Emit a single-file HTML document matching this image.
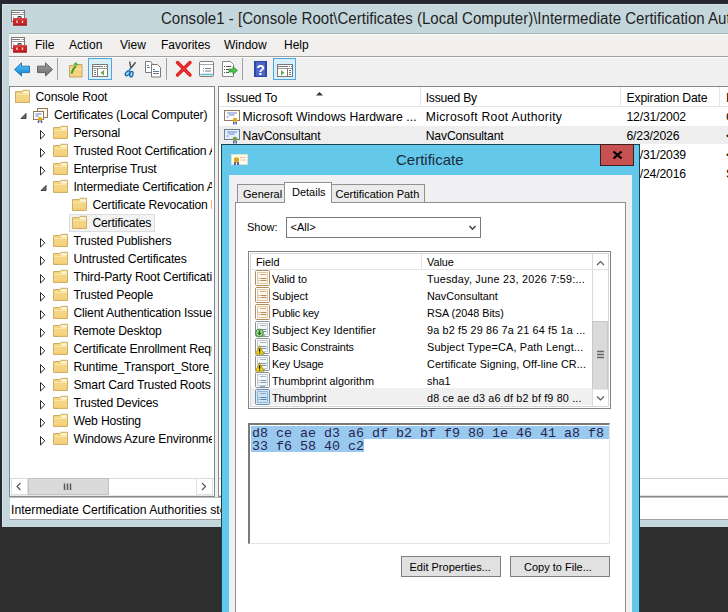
<!DOCTYPE html>
<html><head><meta charset="utf-8">
<style>
*{margin:0;padding:0;box-sizing:border-box}
html,body{width:728px;height:612px;overflow:hidden;background:#2e2e2e;font-family:"Liberation Sans",sans-serif;color:#000;position:relative}
.a{position:absolute}
.t{position:absolute;white-space:nowrap;line-height:1}
svg{position:absolute;overflow:visible}
.clip{position:absolute;overflow:hidden}
.tr{font-size:12.2px;letter-spacing:-0.18px;color:#000}
.tl{font-size:12.2px;letter-spacing:-0.16px;color:#000}
.tv{font-size:10.8px;color:#000}
.td{font-size:11px;color:#000}
</style></head><body>
<svg width="0" height="0" style="position:absolute">
<defs>
<symbol id="folder" viewBox="0 0 16 18">
<path d="M0.5 3.5h6.5l1-1.2h6.5v12.2h-14z" fill="#f4d583" stroke="#cfae66"/>
<path d="M8 3.3h6v2.2h-6z" fill="#fdf6de"/>
<path d="M1 6.5h13" stroke="#f9e6ac"/>
<path d="M1 13h13" stroke="#efca6e"/>
</symbol>
<symbol id="tri" viewBox="0 0 8 18">
<path d="M0.5 6.5L4.8 10.8L0.5 15z" fill="#fff" stroke="#2a2a2a"/>
</symbol>
<symbol id="trio" viewBox="0 0 8 18">
<path d="M6 7.5v5H1z" fill="#6e6e6e" stroke="#303030" stroke-width="0.9" stroke-linejoin="round"/>
</symbol>
<symbol id="certs" viewBox="0 0 16 18">
<rect x="4.5" y="2.5" width="10" height="9" fill="#fbf5ea" stroke="#8f7a5c"/>
<rect x="0.5" y="5.5" width="10" height="8" fill="#fff" stroke="#8f7a5c"/>
<path d="M2.5 8h6M2.5 10h3" stroke="#5d78c8"/>
<circle cx="7" cy="13" r="2.2" fill="#e0a81c"/>
<path d="M5.5 14.5v2.5M8.5 14.5v2.5" stroke="#3a4fa8" stroke-width="1.5"/>
</symbol>
<symbol id="cert" viewBox="0 0 17 19">
<rect x="0.5" y="3.5" width="15" height="10" fill="#fff" stroke="#977a5c"/>
<path d="M3 6h10M4.5 8h6M2.5 10h2" stroke="#6a84cf"/>
<circle cx="11" cy="13" r="2.3" fill="#e2a61e"/>
<path d="M9.8 15v2.5M12.2 15v2.5" stroke="#3d55b0" stroke-width="1.4"/>
</symbol>
<symbol id="certb" viewBox="0 0 17 19">
<rect x="0.5" y="3.5" width="15" height="10" fill="#e3f0fb" stroke="#6c7c8c"/>
<path d="M3 6h10M4.5 8h6M2.5 10h2" stroke="#6a84cf"/>
<circle cx="11" cy="13" r="2.3" fill="#7aa041"/>
<path d="M9.8 15v2.5M12.2 15v2.5" stroke="#3d55b0" stroke-width="1.4"/>
</symbol>
<symbol id="fo" viewBox="0 0 16 17">
<rect x="0.5" y="0.5" width="14" height="15" rx="1.2" fill="#fff" stroke="#b48c58"/>
<path d="M2.5 2.5h10v11h-10z" fill="#fdf6ec" stroke="#dfc6a3"/>
<path d="M5 4.5h6" stroke="#cfae82"/>
<path d="M3.5 8.5h1M5.5 8.5h6M3.5 10.5h1M5.5 10.5h6" stroke="#b38c5c"/>
</symbol>
<symbol id="fb" viewBox="0 0 16 17">
<rect x="0.5" y="0.5" width="14" height="15" rx="1.2" fill="#fff" stroke="#8c9298"/>
<path d="M2.5 2.5h10v11h-10z" fill="#f6f9fb" stroke="#c3cbd2"/>
<path d="M5 4.5h6" stroke="#aab4bd"/>
<path d="M3.5 8.5h1M5.5 8.5h6M3.5 10.5h1M5.5 10.5h6" stroke="#7f93a6"/>
<path d="M5 14.5h5" stroke="#6fb7d6"/>
</symbol>
<symbol id="fs" viewBox="0 0 16 17">
<rect x="0.5" y="0.5" width="14" height="15" rx="1.2" fill="#d6e8f8" stroke="#6e8fb0"/>
<path d="M2.5 2.5h10v11h-10z" fill="#cfe3f6" stroke="#94b6d6"/>
<path d="M5 4.5h6" stroke="#88a9c9"/>
<path d="M3.5 8.5h1M5.5 8.5h6M3.5 10.5h1M5.5 10.5h6" stroke="#5c84ad"/>
</symbol>
<symbol id="fg" viewBox="0 0 16 17">
<use href="#fb"/>
<circle cx="4.5" cy="12" r="3.9" fill="#a6dc8e" stroke="#3b8a3b" stroke-width="1"/>
<path d="M4.5 9.3v4.2M2.7 11.6l1.8 2l1.8-2" stroke="#2a6e2a" fill="none" stroke-width="1.3"/>
</symbol>
<symbol id="fw" viewBox="0 0 16 17">
<use href="#fb"/>
<path d="M4.6 7.6L0.4 16.2h8.5z" fill="#f6d60c" stroke="#a08a10" stroke-width="0.8" stroke-linejoin="round"/>
<path d="M4.6 10.5v3.2M4.6 14.4v1.2" stroke="#111" stroke-width="1.3"/>
</symbol>
</defs>
</svg>

<!-- top strip + MMC frame -->
<div class="a" style="left:0;top:0;width:728px;height:527px;background:#262a30"></div>
<div class="a" style="left:2px;top:4px;width:726px;height:523px;background:#c4d7dc;border-left:1px solid #d5e2e6;border-top:1px solid #d5e2e6"></div>
<div class="t" style="left:161px;top:11px;font-size:15.6px;transform:scaleX(0.965);transform-origin:0 0;color:#1f1f1f">Console1 - [Console Root\Certificates (Local Computer)\Intermediate Certification Authorities\Certificates]</div>
<!-- menu bar -->
<div class="a" style="left:9px;top:33px;width:719px;height:1px;background:#a9b4b8"></div>
<div class="a" style="left:9px;top:34px;width:719px;height:22px;background:#f1f0ef;border-top:1px solid #fafafa"></div>
<div class="a" style="left:9px;top:56px;width:719px;height:1px;background:#a0a0a0"></div>
<div class="t" style="left:35px;top:39px;font-size:12px">File</div>
<div class="t" style="left:69px;top:39px;font-size:12px">Action</div>
<div class="t" style="left:120px;top:39px;font-size:12px">View</div>
<div class="t" style="left:161px;top:39px;font-size:12px">Favorites</div>
<div class="t" style="left:224px;top:39px;font-size:12px">Window</div>
<div class="t" style="left:284px;top:39px;font-size:12px">Help</div>
<div class="a" style="left:9px;top:57px;width:719px;height:440px;background:#f0f0f0"></div>
<!-- toolbar -->
<div class="a" style="left:9px;top:57px;width:719px;height:29px;background:#f0f0f0;border-top:1px solid #fbfbfb"></div>
<div class="a" style="left:57px;top:58px;width:1px;height:22px;background:#a0a0a0"></div>
<div class="a" style="left:166px;top:58px;width:1px;height:22px;background:#a0a0a0"></div>
<div class="a" style="left:242px;top:58px;width:1px;height:22px;background:#a0a0a0"></div>
<div class="a" style="left:88px;top:58px;width:24px;height:22px;background:#d9f0fc;border:1px solid #4fa6de"></div>
<div class="a" style="left:273px;top:58px;width:23px;height:22px;background:#d9f0fc;border:1px solid #4fa6de"></div>

<!-- toolbar & app icons -->
<svg style="left:0;top:0" width="728" height="90">
<defs>
<g id="mmcico">
<rect x="11.5" y="10.5" width="13" height="11" fill="#fff" stroke="#7b7b7b"/>
<path d="M12 12.5h8M21.5 12.5h1M23 12.5h1" stroke="#7b7b7b"/>
<path d="M12 14.5h12" stroke="#9a9a9a"/>
<path d="M13 17h1" stroke="#7b7b7b"/>
<path d="M17.5 17.5q2-1.8 4 0" stroke="#222" fill="none" stroke-width="1.2"/>
<rect x="13" y="18" width="14" height="7.5" rx="1" fill="#c9252a"/>
<path d="M13.5 19h13" stroke="#e0585c"/>
<path d="M17 20.5v2.5M22.5 20.5v2.5" stroke="#f6e3c0" stroke-width="1.3"/>
<path d="M13 25h14" stroke="#8e1518"/>
</g>
<linearGradient id="gb" x1="0" y1="0" x2="0" y2="1"><stop offset="0" stop-color="#5cc8f7"/><stop offset="1" stop-color="#0d7fd0"/></linearGradient>
<linearGradient id="gg" x1="0" y1="0" x2="0" y2="1"><stop offset="0" stop-color="#9e9e9e"/><stop offset="1" stop-color="#6e6e6e"/></linearGradient>
</defs>
<use href="#mmcico"/>
<use href="#mmcico" y="27"/>
<!-- back -->
<path d="M14.5 69.5L21.5 62.8V66.2H29.5V72.6H21.5V76z" fill="url(#gb)" stroke="#1f6fb0" stroke-width="0.9" stroke-linejoin="round"/>
<!-- forward -->
<path d="M52.5 69.5L45.5 62.8V66.2H37.5V72.6H45.5V76z" fill="url(#gg)" stroke="#5a5a5a" stroke-width="0.9" stroke-linejoin="round"/>
<!-- folder up -->
<path d="M69.5 65.5h5l1 -1h6.5v12.5h-12.5z" fill="#f4d27f" stroke="#c5a467"/>
<path d="M70 69h12" stroke="#fbe6a8"/>
<path d="M71.5 73.5q1.5-5 4.5-7.5" stroke="#3f9a2a" stroke-width="2" fill="none"/>
<path d="M73 64.5l3-2.5l2.5 3.5z" fill="#42b03a"/>
<!-- show/hide tree -->
<rect x="92.5" y="64.5" width="15" height="12" fill="#fff" stroke="#7a7a7a"/>
<path d="M93 66.5h10M104 66.5h1M106 66.5h1" stroke="#7a7a7a"/>
<path d="M93 68.5h14" stroke="#9a9a9a"/>
<path d="M97.5 69v7" stroke="#7a7a7a"/>
<path d="M94 70.5h2M94 72.5h2M94 74.5h2" stroke="#7a7a7a"/>
<path d="M104 70l-3.5 2.8l3.5 2.8z" fill="#5fae46"/>
<!-- scissors -->
<path d="M129.6 61.5l1.4 6.5M135.6 62.3l-4.3 5.5" stroke="#505050" stroke-width="1.4"/>
<path d="M131 67.5l-1.5 2.5" stroke="#2a78c0" stroke-width="1.6"/>
<ellipse cx="127.6" cy="73.3" rx="1.7" ry="2.9" fill="#9adcf6" stroke="#1f66a8" stroke-width="1.3" transform="rotate(40 127.6 73.3)"/>
<ellipse cx="131.4" cy="74.2" rx="1.6" ry="2.8" fill="#9adcf6" stroke="#1f66a8" stroke-width="1.3" transform="rotate(12 131.4 74.2)"/>
<!-- copy -->
<path d="M145.5 61.5h5l1.5 1.5v9.5h-6.5z" fill="#fff" stroke="#7a7a7a"/>
<path d="M147 65.5h2M147 67.5h3" stroke="#6f8296"/>
<path d="M151.5 64.5h6l3 3v9.5h-9z" fill="#fff" stroke="#7a7a7a"/>
<path d="M153 69.5h2M153 71.5h6M153 73.5h6" stroke="#5e7891"/>
<!-- red x -->
<path d="M177.5 62.5l12.5 12.5M190 62.5l-12.5 12.5" stroke="#e01e1e" stroke-width="3.4" stroke-linecap="round"/>
<path d="M177.5 62.5l12.5 12.5M190 62.5l-12.5 12.5" stroke="#ff5a5a" stroke-width="1" stroke-linecap="round" opacity="0.6"/>
<!-- properties -->
<rect x="199.5" y="61.5" width="14" height="15" rx="1.5" fill="#fff" stroke="#7f7f7f"/>
<path d="M200 64.5h13" stroke="#a8a8a8"/>
<path d="M203 68.5h1M205 68.5h6M203 71h1M205 71h6" stroke="#6b7f93"/>
<path d="M200.5 74.5h12" stroke="#59b7c9" stroke-width="1.5"/>
<!-- export list -->
<path d="M222.5 61.5h8l3 3v12h-11z" fill="#fff" stroke="#8a8a8a"/>
<path d="M224 66.5h1M226 66.5h5M224 69.5h1M226 69.5h3M224 72.5h1M226 72.5h3" stroke="#555"/>
<path d="M229 69h4v-2.5l4.5 4l-4.5 4v-2.5h-4z" fill="#4cc04a" stroke="#2f8a2c" stroke-width="0.7"/>
<!-- help -->
<rect x="254" y="61" width="13" height="16" fill="#2f47a8"/>
<rect x="256" y="62" width="9" height="14" fill="#5a72d2" opacity="0.7"/>
<text x="260.5" y="74.5" font-family="Liberation Sans" font-weight="bold" font-size="14" fill="#fff" text-anchor="middle">?</text>
<!-- action pane -->
<rect x="277.5" y="64.5" width="15" height="12" fill="#fff" stroke="#7a7a7a"/>
<path d="M278 66.5h10M289 66.5h1M291 66.5h1" stroke="#7a7a7a"/>
<path d="M278 68.5h14" stroke="#9a9a9a"/>
<path d="M287.5 69v7" stroke="#7a7a7a"/>
<path d="M289 70.5h2M289 72.5h2M289 74.5h2" stroke="#7a7a7a"/>
<path d="M281 70l3.5 2.8l-3.5 2.8z" fill="#5fae46"/>
</svg>
<!-- tree panel -->
<div class="a" style="left:9px;top:86px;width:206px;height:411px;background:#fff;border:1px solid #828790"></div>
<div class="clip" style="left:10px;top:87px;width:202px;height:390px">
<svg style="left:5px;top:1px" width="16" height="18"><use href="#folder"/></svg>
<div class="t tr" style="left:25.5px;top:4.1px">Console Root</div>
<svg style="left:10px;top:19px" width="8" height="18"><use href="#trio"/></svg>
<svg style="left:23px;top:19px" width="16" height="18"><use href="#certs"/></svg>
<div class="t tr" style="left:44px;top:22.1px">Certificates (Local Computer)</div>
<svg style="left:30px;top:37px" width="8" height="18"><use href="#tri"/></svg>
<svg style="left:43px;top:37px" width="16" height="18"><use href="#folder"/></svg>
<div class="t tr" style="left:63.400000000000006px;top:40.1px">Personal</div>
<svg style="left:30px;top:55px" width="8" height="18"><use href="#tri"/></svg>
<svg style="left:43px;top:55px" width="16" height="18"><use href="#folder"/></svg>
<div class="t tr" style="left:63.400000000000006px;top:58.1px">Trusted Root Certification Authorities</div>
<svg style="left:30px;top:73px" width="8" height="18"><use href="#tri"/></svg>
<svg style="left:43px;top:73px" width="16" height="18"><use href="#folder"/></svg>
<div class="t tr" style="left:63.400000000000006px;top:76.1px">Enterprise Trust</div>
<svg style="left:30px;top:91px" width="8" height="18"><use href="#trio"/></svg>
<svg style="left:43px;top:91px" width="16" height="18"><use href="#folder"/></svg>
<div class="t tr" style="left:63.400000000000006px;top:94.1px">Intermediate Certification Authorities</div>
<svg style="left:62px;top:109px" width="16" height="18"><use href="#folder"/></svg>
<div class="t tr" style="left:82.4px;top:112.1px">Certificate Revocation List</div>
<div class="a" style="left:59px;top:127px;width:86px;height:18px;background:#f3f3f3;border:1px solid #dedede"></div>
<svg style="left:62px;top:127px" width="16" height="18"><use href="#folder"/></svg>
<div class="t tr" style="left:82.4px;top:130.1px">Certificates</div>
<svg style="left:30px;top:145px" width="8" height="18"><use href="#tri"/></svg>
<svg style="left:43px;top:145px" width="16" height="18"><use href="#folder"/></svg>
<div class="t tr" style="left:63.400000000000006px;top:148.1px">Trusted Publishers</div>
<svg style="left:30px;top:163px" width="8" height="18"><use href="#tri"/></svg>
<svg style="left:43px;top:163px" width="16" height="18"><use href="#folder"/></svg>
<div class="t tr" style="left:63.400000000000006px;top:166.1px">Untrusted Certificates</div>
<svg style="left:30px;top:181px" width="8" height="18"><use href="#tri"/></svg>
<svg style="left:43px;top:181px" width="16" height="18"><use href="#folder"/></svg>
<div class="t tr" style="left:63.400000000000006px;top:184.1px">Third-Party Root Certification Authorities</div>
<svg style="left:30px;top:199px" width="8" height="18"><use href="#tri"/></svg>
<svg style="left:43px;top:199px" width="16" height="18"><use href="#folder"/></svg>
<div class="t tr" style="left:63.400000000000006px;top:202.1px">Trusted People</div>
<svg style="left:30px;top:217px" width="8" height="18"><use href="#tri"/></svg>
<svg style="left:43px;top:217px" width="16" height="18"><use href="#folder"/></svg>
<div class="t tr" style="left:63.400000000000006px;top:220.1px">Client Authentication Issuers</div>
<svg style="left:30px;top:235px" width="8" height="18"><use href="#tri"/></svg>
<svg style="left:43px;top:235px" width="16" height="18"><use href="#folder"/></svg>
<div class="t tr" style="left:63.400000000000006px;top:238.1px">Remote Desktop</div>
<svg style="left:30px;top:253px" width="8" height="18"><use href="#tri"/></svg>
<svg style="left:43px;top:253px" width="16" height="18"><use href="#folder"/></svg>
<div class="t tr" style="left:63.400000000000006px;top:256.1px">Certificate Enrollment Requests</div>
<svg style="left:30px;top:271px" width="8" height="18"><use href="#tri"/></svg>
<svg style="left:43px;top:271px" width="16" height="18"><use href="#folder"/></svg>
<div class="t tr" style="left:63.400000000000006px;top:274.1px">Runtime_Transport_Store_Issuers</div>
<svg style="left:30px;top:289px" width="8" height="18"><use href="#tri"/></svg>
<svg style="left:43px;top:289px" width="16" height="18"><use href="#folder"/></svg>
<div class="t tr" style="left:63.400000000000006px;top:292.1px">Smart Card Trusted Roots</div>
<svg style="left:30px;top:307px" width="8" height="18"><use href="#tri"/></svg>
<svg style="left:43px;top:307px" width="16" height="18"><use href="#folder"/></svg>
<div class="t tr" style="left:63.400000000000006px;top:310.1px">Trusted Devices</div>
<svg style="left:30px;top:325px" width="8" height="18"><use href="#tri"/></svg>
<svg style="left:43px;top:325px" width="16" height="18"><use href="#folder"/></svg>
<div class="t tr" style="left:63.400000000000006px;top:328.1px">Web Hosting</div>
<svg style="left:30px;top:343px" width="8" height="18"><use href="#tri"/></svg>
<svg style="left:43px;top:343px" width="16" height="18"><use href="#folder"/></svg>
<div class="t tr" style="left:63.400000000000006px;top:346.1px">Windows Azure Environment</div>
</div>
<!-- tree h-scrollbar -->
<div class="a" style="left:10px;top:478px;width:204px;height:18px;background:#fff;border-top:1px solid #dcdcdc;border-bottom:1px solid #e8e8e8"></div>
<div class="a" style="left:11px;top:478px;width:17px;height:17px;border:1px solid #e0e0e0;border-top:none"></div>
<div class="a" style="left:196px;top:478px;width:17px;height:17px;border:1px solid #e0e0e0;border-top:none"></div>
<div class="a" style="left:28px;top:478px;width:81px;height:17px;background:#dadada;border:1px solid #c2c2c2"></div>
<svg style="left:0;top:0" width="1" height="1">
<path d="M20.5 483l-3.5 3.5l3.5 3.5M202 483l3.5 3.5l-3.5 3.5" fill="none" stroke="#505050" stroke-width="1.1"/>
<path d="M64.5 483.5v6.5M67.5 483.5v6.5M70.5 483.5v6.5" stroke="#5a5a5a" stroke-width="1.5"/>
</svg>

<!-- list panel -->
<div class="a" style="left:218px;top:86px;width:520px;height:411px;background:#fff;border:1px solid #828790"></div>
<div class="clip" style="left:219px;top:87px;width:509px;height:390px">
<div class="a" style="left:0;top:0;width:520px;height:20px;background:#fff;border-bottom:1px solid #e5e5e5"></div>
<div class="a" style="left:201px;top:0;width:1px;height:19px;background:#e5e5e5"></div>
<div class="a" style="left:401px;top:0;width:1px;height:19px;background:#e5e5e5"></div>
<div class="a" style="left:500px;top:0;width:1px;height:19px;background:#e5e5e5"></div>
<div class="t tl" style="left:7.5px;top:5.0px">Issued To</div>
<div class="t tl" style="left:206.7px;top:5.0px;letter-spacing:-0.25px">Issued By</div>
<div class="t tl" style="left:407.5px;top:5.0px">Expiration Date</div>
<div class="t tl" style="left:507px;top:5.0px">Intended Purposes</div>
<svg style="left:97px;top:4px" width="8" height="5"><path d="M0 4.5 L3.5 1 L7 4.5Z" fill="#333"/></svg>
<svg style="left:5px;top:20px" width="17" height="19"><use href="#cert"/></svg>
<div class="t tl" style="left:23.5px;top:24.0px;letter-spacing:0.07px">Microsoft Windows Hardware ...</div>
<div class="t tl" style="left:206.7px;top:24.0px;letter-spacing:0.3px">Microsoft Root Authority</div>
<div class="t tl" style="left:407.5px;top:24.0px">12/31/2002</div>
<div class="t tl" style="left:507px;top:24.0px">Code Signing</div>
<div class="a" style="left:0;top:39px;width:520px;height:18px;background:#eeeeee"></div>
<svg style="left:5px;top:39px" width="17" height="19"><use href="#certb"/></svg>
<div class="t tl" style="left:23.5px;top:43.0px">NavConsultant</div>
<div class="t tl" style="left:206.7px;top:43.0px">NavConsultant</div>
<div class="t tl" style="left:407.5px;top:43.0px">6/23/2026</div>
<div class="t tl" style="left:507px;top:43.0px">&lt;All&gt;</div>
<svg style="left:5px;top:58px" width="17" height="19"><use href="#cert"/></svg>
<div class="t tl" style="left:23.5px;top:62.0px">Hidden</div>
<div class="t tl" style="left:206.7px;top:62.0px">Hidden</div>
<div class="t tl" style="left:407.5px;top:62.0px">12/31/2039</div>
<div class="t tl" style="left:507px;top:62.0px">&lt;All&gt;</div>
<svg style="left:5px;top:77px" width="17" height="19"><use href="#cert"/></svg>
<div class="t tl" style="left:23.5px;top:81.0px">Hidden</div>
<div class="t tl" style="left:206.7px;top:81.0px">Hidden</div>
<div class="t tl" style="left:407.5px;top:81.0px">12/24/2016</div>
<div class="t tl" style="left:507px;top:81.0px">Server Authentication</div>
</div>
<div class="a" style="left:219px;top:478px;width:509px;height:18px;background:#fff;border-top:1px solid #d0d0d0;border-bottom:1px solid #e0e0e0"></div>

<!-- status bar -->
<div class="a" style="left:9px;top:497px;width:740px;height:23px;background:#fff;border:1px solid #a0a0a0;border-left-color:#d0d0d0;border-top-color:#bdbdbd"></div>
<div class="t" style="left:11px;top:503.7px;font-size:12.2px">Intermediate Certification Authorities store contains 56 certificates.</div>

<!-- dialog -->
<div class="a" style="left:221px;top:144px;width:419px;height:480px;background:#64c8ea;border:1px solid #1c4150"></div>
<div class="a" style="left:229px;top:175px;width:403px;height:440px;background:#f0f0f3;border-left:1px solid #dcf5fb"></div>
<div class="t" style="left:396px;top:152px;font-size:15px;color:#1b2d3a">Certificate</div>
<div class="a" style="left:600px;top:144px;width:34px;height:22px;background:#c75050;border:1px solid #3c1f1f"></div>
<svg style="left:0;top:0" width="1" height="1">
<path d="M613.5 151.5l8 7M621.5 151.5l-8 7" stroke="#000" stroke-width="2.3"/>
<rect x="231.5" y="154.5" width="16" height="10" fill="#fffbe9" stroke="#e8e1c8" stroke-width="0.8"/>
<path d="M240 157.5h6M240 160h6" stroke="#f2b8b8" stroke-width="0.9"/>
<circle cx="236.5" cy="159.8" r="2.6" fill="#d8a51c"/>
<path d="M235 162v3M238 162v3" stroke="#283d7a" stroke-width="1.5"/>
</svg>
<!-- tabs -->
<div class="a" style="left:235px;top:202px;width:391px;height:420px;background:#fff;border:1px solid #8e8e8e"></div>
<div class="a" style="left:237px;top:184px;width:48px;height:19px;background:#ebebeb;border:1px solid #919191"></div>
<div class="a" style="left:331px;top:184px;width:94px;height:19px;background:#ebebeb;border:1px solid #919191"></div>
<div class="a" style="left:284px;top:182px;width:48px;height:21px;background:#fff;border:1px solid #919191;border-bottom:none"></div>
<div class="t td" style="left:243px;top:189px">General</div>
<div class="t td" style="left:292px;top:187px">Details</div>
<div class="t td" style="left:335.5px;top:189px">Certification Path</div>
<div class="t td" style="left:247px;top:222px">Show:</div>
<div class="a" style="left:286px;top:217px;width:195px;height:21px;background:#fff;border:1px solid #7a7a7a"></div>
<svg style="left:0;top:0" width="1" height="1"><path d="M469.5 226l3 3.2l3-3.2" fill="none" stroke="#444" stroke-width="1.6"/></svg>
<div class="t td" style="left:290.5px;top:222px">&lt;All&gt;</div>
<!-- listview -->
<div class="a" style="left:248px;top:251px;width:363px;height:158px;background:#fff;border:1px solid #828282"></div>
<div class="clip" style="left:250px;top:253px;width:342px;height:154px">
<div class="a" style="left:0;top:0;width:342px;height:17px;background:#fff;border-bottom:1px solid #e5e5e5"></div>
<div class="a" style="left:171px;top:0;width:1px;height:16px;background:#e5e5e5"></div>
<div class="t tv" style="left:6px;top:3.9px">Field</div>
<div class="t tv" style="left:177px;top:3.9px">Value</div>
<svg style="left:5px;top:17px" width="16" height="17"><use href="#fo"/></svg>
<div class="t tv" style="left:21.899999999999977px;top:20.9px">Valid to</div>
<div class="t tv" style="left:177px;top:20.9px;letter-spacing:0.240px">Tuesday, June 23, 2026 7:59:...</div>
<svg style="left:5px;top:34px" width="16" height="17"><use href="#fo"/></svg>
<div class="t tv" style="left:21.899999999999977px;top:37.9px">Subject</div>
<div class="t tv" style="left:177px;top:37.9px">NavConsultant</div>
<svg style="left:5px;top:51px" width="16" height="17"><use href="#fo"/></svg>
<div class="t tv" style="left:21.899999999999977px;top:54.9px;letter-spacing:-0.222px">Public key</div>
<div class="t tv" style="left:177px;top:54.9px">RSA (2048 Bits)</div>
<svg style="left:5px;top:68px" width="16" height="17"><use href="#fg"/></svg>
<div class="t tv" style="left:21.899999999999977px;top:71.9px;letter-spacing:0.086px">Subject Key Identifier</div>
<div class="t tv" style="left:177px;top:71.9px;letter-spacing:0.163px">9a b2 f5 29 86 7a 21 64 f5 1a ...</div>
<svg style="left:5px;top:85px" width="16" height="17"><use href="#fw"/></svg>
<div class="t tv" style="left:21.899999999999977px;top:88.9px;letter-spacing:-0.119px">Basic Constraints</div>
<div class="t tv" style="left:177px;top:88.9px;letter-spacing:0.190px">Subject Type=CA, Path Lengt...</div>
<svg style="left:5px;top:102px" width="16" height="17"><use href="#fw"/></svg>
<div class="t tv" style="left:21.899999999999977px;top:105.9px;letter-spacing:-0.150px">Key Usage</div>
<div class="t tv" style="left:177px;top:105.9px;letter-spacing:0.091px">Certificate Signing, Off-line CR...</div>
<svg style="left:5px;top:119px" width="16" height="17"><use href="#fb"/></svg>
<div class="t tv" style="left:21.899999999999977px;top:122.9px">Thumbprint algorithm</div>
<div class="t tv" style="left:177px;top:122.9px">sha1</div>
<div class="a" style="left:0;top:135px;width:342px;height:17px;background:#f0f0f0"></div>
<svg style="left:5px;top:136px" width="16" height="17"><use href="#fs"/></svg>
<div class="t tv" style="left:21.899999999999977px;top:139.9px">Thumbprint</div>
<div class="t tv" style="left:177px;top:139.9px;letter-spacing:0.156px">d8 ce ae d3 a6 df b2 bf f9 80 ...</div>
</div>
<div class="a" style="left:592px;top:253px;width:16px;height:154px;background:#fff;border-left:1px solid #dadada"></div>
<div class="a" style="left:592px;top:321px;width:16px;height:69px;background:#dadada;border:1px solid #c8c8c8"></div>
<div class="a" style="left:592px;top:389px;width:17px;height:17px;border-top:1px solid #e8e8e8"></div>
<div class="a" style="left:592px;top:269px;width:17px;height:1px;background:#e0e0e0"></div>
<svg style="left:0;top:0" width="1" height="1">
<path d="M597 265l3.5-3.5l3.5 3.5M597 396.5l3.5 3.5l3.5-3.5" fill="none" stroke="#5a5a5a" stroke-width="1.2"/>
<path d="M597 351.5h7M597 354.5h7M597 357.5h7" stroke="#666" stroke-width="1.3"/>
</svg>
<div class="a" style="left:250px;top:253px;width:359px;height:154px;border:1px solid #d6d6d6"></div>
<!-- textbox -->
<div class="a" style="left:248px;top:423px;width:362px;height:121px;background:#fff;border:1px solid #e3e3e3;border-top:2px solid #7a7a7a;border-left:2px solid #7a7a7a"></div>
<!-- hex text -->
<div class="a" style="left:251px;top:426px;width:358px;height:13px;background:#99c9ef"></div>
<div class="a" style="left:251px;top:439px;width:113px;height:13px;background:#99c9ef"></div>
<div class="t" style="left:252px;top:427px;font-family:'Liberation Mono',monospace;font-size:13.33px;line-height:13px;color:#25254f">d8 ce ae d3 a6 df b2 bf f9 80 1e 46 41 a8 f8<br>33 f6 58 40 c2</div>
<!-- buttons -->
<div class="a" style="left:401px;top:556px;width:100px;height:21px;background:#e1e1e1;border:1px solid #7f7f7f"></div>
<div class="a" style="left:510px;top:556px;width:100px;height:21px;background:#e1e1e1;border:1px solid #7f7f7f"></div>
<div class="t td" style="left:409.5px;top:562px">Edit Properties...</div>
<div class="t td" style="left:524px;top:562px">Copy to File...</div>
</body></html>
